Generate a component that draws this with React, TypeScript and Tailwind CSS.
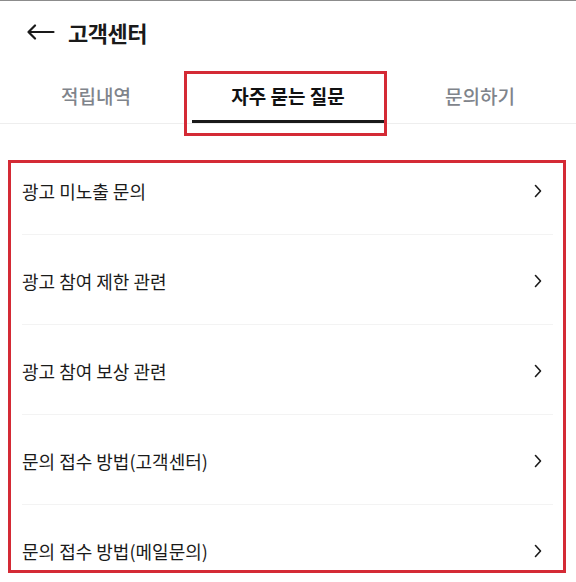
import React from "react";

const items = [
  "광고 미노출 문의",
  "광고 참여 제한 관련",
  "광고 참여 보상 관련",
  "문의 접수 방법(고객센터)",
  "문의 접수 방법(메일문의)",
];

function Chevron() {
  return (
    <svg width="10" height="16" viewBox="0 0 10 16" className="shrink-0">
      <path d="M2.5 2.5 L7.5 8 L2.5 13.5" fill="none" stroke="#1a1a1a" strokeWidth="1.6" strokeLinecap="round" strokeLinejoin="round" />
    </svg>
  );
}

export default function App() {
  return (
    <div
      className="relative w-full h-[582px] overflow-hidden bg-white border-t border-[#8c8c8c]"
      style={{ fontFamily: '"Noto Sans CJK KR", "Noto Sans", sans-serif' }}
    >
      {/* Header */}
      <div className="flex h-[62px] items-center pl-[27px]">
        <svg width="28" height="16" viewBox="0 0 28 16" className="shrink-0">
          <path d="M1.5 8 H26.5 M8 1.5 L1.5 8 L8 14.5" fill="none" stroke="#1a1a1a" strokeWidth="2.2" strokeLinecap="round" strokeLinejoin="round" />
        </svg>
        <span className="ml-[13px] text-[22px] font-bold leading-none text-[#1a1a1a] tracking-[-0.5px]">고객센터</span>
      </div>

      {/* Tabs */}
      <div className="grid grid-cols-3 h-[61px] border-b border-[#eeeeee]">
        <div className="flex items-center justify-center pt-[6px] text-[19px] font-medium text-[#7f848b]">적립내역</div>
        <div className="relative flex items-center justify-center pt-[6px] text-[19px] font-bold text-[#111111]">
          자주 묻는 질문
          <div className="absolute bottom-0 left-0 right-0 h-[3px] bg-[#1a1a1a]" />
        </div>
        <div className="flex items-center justify-center pt-[6px] text-[19px] font-medium text-[#7f848b]">문의하기</div>
      </div>

      {/* List */}
      <div className="pt-[21px] pl-[22px] pr-[23px]">
        {items.map((t) => (
          <div key={t} className="flex h-[90px] items-center justify-between border-b border-[#f3f3f3] pt-[3px] pr-[10px]">
            <span className="text-[18px] text-[#1a1a1a] leading-none">{t}</span>
            <Chevron />
          </div>
        ))}
      </div>

      {/* Annotation overlays */}
      <div className="pointer-events-none absolute left-[184px] top-[70px] h-[65px] w-[203px] border-[3px] border-[#d42a35]" />
      <div className="pointer-events-none absolute left-[8px] top-[159px] h-[413px] w-[558px] border-[3px] border-[#d42a35]" />
    </div>
  );
}
